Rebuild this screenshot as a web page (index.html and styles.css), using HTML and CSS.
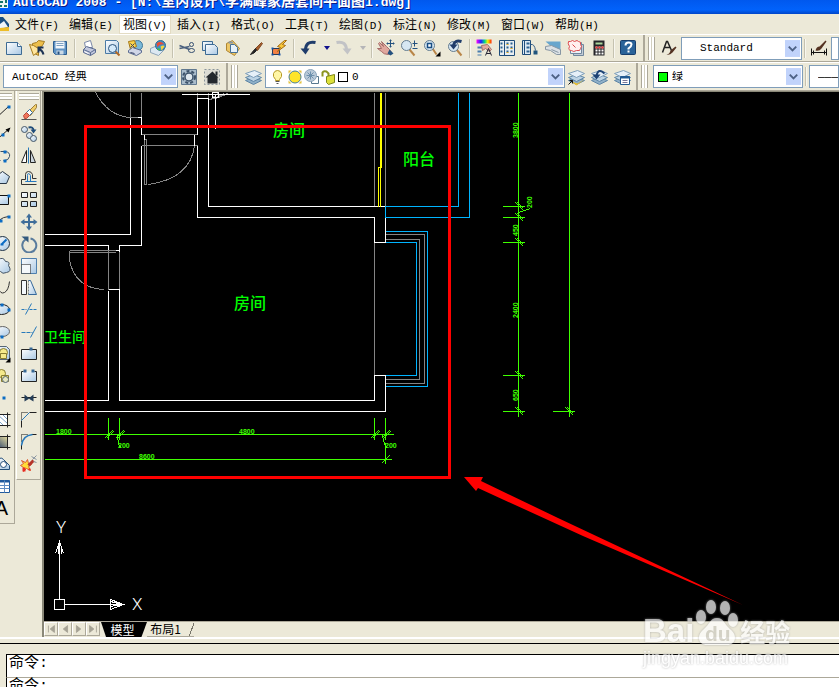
FILE: index.html
```
<!DOCTYPE html>
<html lang="zh-CN">
<head>
<meta charset="utf-8">
<title>AutoCAD 2008</title>
<link rel="stylesheet" href="styles.css">
</head>
<body>
<svg class="defs" aria-hidden="true">
  <defs>
    <linearGradient id="ice" x1="0" y1="0" x2="1" y2="1"><stop offset="0" stop-color="#fff"/><stop offset="1" stop-color="#a9c8e4"/></linearGradient>
    <linearGradient id="hue"><stop offset="0" stop-color="#f0f"/><stop offset=".3" stop-color="#22f"/><stop offset=".55" stop-color="#0d8"/><stop offset=".75" stop-color="#fe0"/><stop offset="1" stop-color="#f20"/></linearGradient>
    <linearGradient id="dark" x1="0" y1="1" x2="1" y2="0"><stop offset="0" stop-color="#223a66"/><stop offset="1" stop-color="#e6dca0"/></linearGradient>
  </defs>
  <symbol id="layers" viewBox="0 0 18 18"><path d="M1 12l8-3 8 3-8 4z" fill="#8fb0c8" stroke="#5f86a6"/><path d="M1 9l8-3 8 3-8 4z" fill="#bcd3e4" stroke="#5f86a6"/><path d="M1 5l9-3 7 3-8 4z" fill="#e6f0f8" stroke="#7f9fba"/></symbol>
  <symbol id="down" viewBox="0 0 16 18"><rect width="16" height="18" fill="#c1d3fb"/><path d="M4 7l4 4 4-4" fill="none" stroke="#4d6185" stroke-width="2"/></symbol>
</svg>

<header class="title">
  <svg width="9" height="9" viewBox="0 0 9 9" aria-hidden="true"><path d="M0 0h8v8H0z" fill="#eef4f4"/><path d="M0 1h3v2H0zM5 0h2v3H5zM0 5h2v2H0zM4 5h3v2H4z" fill="#15756d"/></svg>
  <h1>AutoCAD 2008 - [N:\<span>室内设计</span>\<span>李满峰家居套间平面图</span>1.dwg]</h1>
</header>

<nav class="menu" aria-label="菜单">
  <svg class="app" width="10" height="18" viewBox="0 0 10 18" aria-hidden="true"><path d="M0 2h3l6 7v7H0z" fill="#194e80"/><path d="M0 9l4-3 4 6-8 2z" fill="#eef5fa"/><path d="M0 13l9-1v4H0z" fill="#edbd28"/></svg>
  <button>文件<span>(F)</span></button><button>编辑<span>(E)</span></button><button class="on">视图<span>(V)</span></button><button>插入<span>(I)</span></button><button>格式<span>(O)</span></button><button>工具<span>(T)</span></button><button>绘图<span>(D)</span></button><button>标注<span>(N)</span></button><button>修改<span>(M)</span></button><button>窗口<span>(W)</span></button><button>帮助<span>(H)</span></button>
</nav>

<div class="bar">
  <div class="tools std" role="toolbar" aria-label="标准">
    <button aria-label="新建"><svg viewBox="-.5 -.5 18 18"><path d="M1 3h11l4 4v8H1z" fill="url(#ice)" stroke="#3d6b94"/><path d="M12 3v4h4" fill="#fff" stroke="#3d6b94"/></svg></button>
    <button aria-label="打开"><svg viewBox="-.5 -.5 18 18"><path d="M4 4l4-1 2-2 6 1-2 4-4 3v7l-6-3z" fill="#edbf4b" stroke="#a57c22"/><path d="M5 16L1 5l4 1 5 3v3z" fill="#ffe59b" stroke="#a57c22"/><path d="M15 15q-1-4-5-6m0 4V8h5" fill="none" stroke="#1d3354" stroke-width="2"/></svg></button>
    <button aria-label="保存"><svg viewBox="-.5 -.5 18 18"><path d="M2 2h13v13H4l-2-2z" fill="#5f93c4" stroke="#2c5d8f"/><path d="M4 2h9v7H4z" fill="#f2f7fb"/><path d="M5 4h7M5 6h7" stroke="#7da1c2"/><path d="M5 11h7v4H5z" fill="#cad9e6"/><path d="M6 12h2v3H6z" fill="#24507f"/></svg></button>
    <i class="sep"></i>
    <button aria-label="打印"><svg viewBox="-.5 -.5 18 18"><path d="M5 8L4 3l6-2 2 7z" fill="#fff" stroke="#7987a8"/><path d="M3 10l3-3 9 3v3l-5 3-7-3z" fill="#c3c9de" stroke="#596a90"/><path d="M3 10l7 3 5-3M10 13v3" fill="none" stroke="#596a90"/><path d="M4 12l4 2" stroke="#fff"/></svg></button>
    <button aria-label="打印预览"><svg viewBox="-.5 -.5 18 18"><path d="M2 1h11l2 2v11H2z" fill="url(#ice)" stroke="#4c7ba5"/><path d="M12 12l4 4" stroke="#b26924" stroke-width="2"/><circle cx="9" cy="9" r="4" fill="#d5eafa" stroke="#2a527a"/></svg></button>
    <button aria-label="发布"><svg viewBox="-.5 -.5 18 18"><circle cx="11" cy="6" r="5" fill="#7ab9d8" stroke="#3f7798"/><path d="M2 2l6-1 2 6-6 3z" fill="#fbd44b" stroke="#a47717"/><path d="M2 11l4-3 9 3v2l-5 3-8-3z" fill="#d0d6e7" stroke="#596a90"/><path d="M4 4l4 4M8 4L4 8M4 13l4 1" stroke="#3a4566"/></svg></button>
    <button aria-label="三维 DWF"><svg viewBox="-.5 -.5 18 18"><path d="M1 9l7-3 7 4-6 6-8-3z" fill="#dce8f2" stroke="#8fa5b9"/><circle cx="11" cy="6" r="5" fill="#3e8fca" stroke="#2f6d94"/><path d="M7 4q4-4 8 1-5-1-7 3z" fill="#e74c35"/><path d="M11 7q3-2 4 0l-3 4z" fill="#f8d537"/><path d="M8 8l3 2-1 1-2-1z" fill="#4fc03d"/></svg></button>
    <i class="sep"></i>
    <button aria-label="剪切"><svg viewBox="-.5 -.5 18 18"><path d="M1 6l10 4M1 9l10-2" stroke="#4a607e" stroke-width="1.5"/><ellipse cx="13" cy="5" rx="2" ry="2" fill="none" stroke="#334d70"/><ellipse cx="13" cy="11" rx="3" ry="2" fill="none" stroke="#334d70"/></svg></button>
    <button aria-label="复制"><svg viewBox="-.5 -.5 18 18"><path d="M1 2h10v9H1z" fill="url(#ice)" stroke="#3d6b94"/><path d="M4 5h9l3 3v7H4z" fill="url(#ice)" stroke="#3d6b94"/></svg></button>
    <button aria-label="粘贴"><svg viewBox="-.5 -.5 18 18"><path d="M2 4l6-3 7 8-5 7-8-5z" fill="#edc767" stroke="#ad8431"/><path d="M6 5h4l3 3v5H6z" fill="#e6f1f9" stroke="#456f96"/><path d="M4 2h4l1 2H4z" fill="#8a98a5"/></svg></button>
    <button aria-label="特性匹配"><svg viewBox="-.5 -.5 18 18"><path d="M8 9l6-6 1 1-5 7z" fill="#a95e2b" stroke="#7e4a25"/><path d="M3 15q4-1 6-4L8 9q-2 2-5 6z" fill="#222" stroke="#222"/></svg></button>
    <button aria-label="块编辑器"><svg viewBox="-.5 -.5 18 18"><path d="M2 9h7v6H2z" fill="#f28145" stroke="#273b57"/><path d="M14 1L7 7l3 1-3 4 8-6-3-1 4-4z" fill="#f8c839" stroke="#a46a11"/><path d="M1 8h2v2H1zM8 14h2v2H8zM1 14h2v2H1z" fill="#1855a5"/></svg></button>
    <i class="sep"></i>
    <button aria-label="放弃"><svg viewBox="-.5 -.5 18 18"><path d="M16 3Q6 1 6 11" fill="none" stroke="#1f3c6b" stroke-width="3"/><path d="M1 9h9l-4 6z" fill="#1f3c6b"/></svg></button>
    <button class="more" aria-label="放弃列表"><svg viewBox="0 0 6 4"><path d="M0 0h6L3 4z" fill="#11118c"/></svg></button>
    <button aria-label="重做"><svg viewBox="-.5 -.5 18 18"><path d="M1 3q10-2 10 8" fill="none" stroke="#c2c3c6" stroke-width="3"/><path d="M7 9h9l-4 6z" fill="#c2c3c6"/></svg></button>
    <button class="more" aria-label="重做列表"><svg viewBox="0 0 6 4"><path d="M0 0h6L3 4z" fill="#b5b5b8"/></svg></button>
    <i class="sep"></i>
    <button aria-label="平移"><svg viewBox="-.5 -.5 18 18"><path d="M2 3l4 4-2-5 5 5 3 3 2 3-3 2q-5 0-7-3L0 9l4 0-3-5z" fill="#e0a79e" stroke="#a56b68"/><path d="M12 10l4 4-3 2-3-2z" fill="#24517f"/><path d="M13 0v8M9 4h8M12 1h2M12 7h2M10 3v2M16 3v2" fill="none" stroke="#24517f"/></svg></button>
    <button aria-label="实时缩放"><svg viewBox="-.5 -.5 18 18"><path d="M9 10l5 6" stroke="#b98548" stroke-width="2"/><circle cx="6" cy="6" r="5" fill="#d7e7f2" stroke="#647c90"/><path d="M12 4h5M14 1v6M12 9h5" stroke="#24517f"/></svg></button>
    <button aria-label="窗口缩放"><svg viewBox="-.5 -.5 18 18"><path d="M9 9l4 6" stroke="#b98548" stroke-width="2"/><circle cx="6" cy="6" r="5" fill="#d7e7f2" stroke="#647c90"/><path d="M4 4h4v4H4z" fill="#fff" stroke="#174d83" stroke-width="1.5"/><path d="M17 12v5h-5z"/></svg></button>
    <button aria-label="缩放上一个"><svg viewBox="-.5 -.5 18 18"><path d="M10 10l5 6" stroke="#b98548" stroke-width="2"/><circle cx="7" cy="7" r="5" fill="#d7e7f2" stroke="#647c90"/><path d="M15 2Q8 0 7 6" fill="none" stroke="#1f3c6b" stroke-width="3"/><path d="M3 5h8l-4 5z" fill="#1f3c6b"/></svg></button>
    <i class="sep"></i>
    <button aria-label="特性"><svg viewBox="-.5 -.5 18 18"><path d="M1 0h15v4H1z" fill="url(#hue)"/><path d="M2 7h5v2H2zM2 11h4v2H2zM2 15h4v1H2z" fill="#477cae"/><path d="M6 6l6-1 4 5-2 2-4-3-3 2z" fill="#e5aaa0" stroke="#a5736c"/><path d="M10 16l3-7 3 7M11 14h4" fill="none" stroke="#223"/></svg></button>
    <button aria-label="设计中心"><svg viewBox="-.5 -.5 18 18"><path d="M1 1h15v15H1z" fill="#e9eef1" stroke="#1f4d7b"/><path d="M6 1v15" stroke="#1f4d7b"/><path d="M2 4h2M2 8h2M2 12h2M8 4h2M12 4h2M8 8h2M12 8h2M8 12h2M12 12h2" stroke="#2b6191" stroke-width="2"/><path d="M8 5h2M12 9h2M8 13h2" stroke="#e2ad25"/></svg></button>
    <button aria-label="工具选项板"><svg viewBox="-.5 -.5 18 18"><path d="M1 1h8v14H1z" fill="#dde9f2" stroke="#1f4d7b"/><path d="M3 1v14" stroke="#1f4d7b"/><path d="M5 4h3M5 8h3M5 12h3" stroke="#2b6191" stroke-width="2"/><path d="M9 5q4-1 5 6" fill="none" stroke="#345f88"/><path d="M12 11h4v4h-4z" fill="#20547d"/></svg></button>
    <button aria-label="图纸集"><svg viewBox="-.5 -.5 18 18"><path d="M1 2h15v13z" fill="#68a6cd"/><path d="M1 7l6-1 9 4v5h-4L6 11l-5-1z" fill="#dbe1e5" stroke="#8796a3"/><path d="M7 10l7 3" stroke="#8796a3"/></svg></button>
    <button aria-label="标记集"><svg viewBox="-.5 -.5 18 18"><path d="M6 5h10v11H6z" fill="#c3ccd6" stroke="#71879d"/><path d="M3 3h11v11H3z" fill="#eaf0f5" stroke="#71879d"/><path d="M3 2q2-2 4 0 3-2 4 0 3 0 2 3 2 2 0 4 0 3-4 2-3 2-5 0-4 0-2-4-2-3-1-5z" fill="#fff0ef" stroke="#dd4a4e"/><path d="M5 5l3 3" stroke="#dd4a4e"/></svg></button>
    <button aria-label="计算器"><svg viewBox="-.5 -.5 18 18"><path d="M3 1h11v15H3z" fill="#242428"/><path d="M5 3h7v2H5z" fill="#a9d49b"/><path d="M5 8h8M5 11h8M5 14h8" stroke="#fff" stroke-width="2" stroke-dasharray="2 1"/><path d="M5 8h8" stroke="#e33" stroke-width="2" stroke-dasharray="2 1"/></svg></button>
    <i class="sep"></i>
    <button aria-label="帮助"><svg viewBox="-.5 -.5 18 18"><rect x="1" y="1" width="15" height="14" rx="1" fill="#2a6399" stroke="#183e6c"/><path d="M6 6q0-3 3-3t3 2-3 4v1M9 11v2" fill="none" stroke="#fff" stroke-width="2"/></svg></button>
  </div>
  <div class="tools styles" role="toolbar" aria-label="样式">
    <i class="grip"></i>
    <button aria-label="文字样式"><svg viewBox="-.5 -.5 18 18"><path d="M2 13L6 2h1l4 9M4 8h6" fill="none" stroke="#222" stroke-width="1.5"/><path d="M6 15q3 0 4-4l5-4 1 1-4 5q-3 3-6 2z" fill="#553322"/></svg></button>
    <div class="combo w120 indent"><select aria-label="文字样式列表"><option>Standard</option></select><svg><use href="#down"/></svg></div>
    <i class="sep"></i>
    <button aria-label="标注样式"><svg viewBox="-.5 -.5 18 18"><path d="M1 9v7M16 9v7M1 13h15M3 11v4M14 11v4" stroke="#111"/><path d="M5 11q1-4 4-4l6-6 1 1-5 7q-2 3-6 2z" fill="#553322"/></svg></button>
    <div class="combo fill"><select aria-label="标注样式列表"><option>ISO-25</option></select></div>
  </div>
</div>

<div class="bar low">
  <div class="tools space" role="toolbar" aria-label="工作空间">
    <div class="combo w174"><select aria-label="工作空间列表"><option>AutoCAD 经典</option></select><svg><use href="#down"/></svg></div>
    <button aria-label="工作空间设置"><svg viewBox="-.5 -.5 18 18"><path d="M1 1h15v15H1z" fill="#a9bccb" stroke="#60788f"/><circle cx="8.500" cy="8.500" r="6" fill="none" stroke="#3b5168" stroke-width="2" stroke-dasharray="3 2"/><circle cx="8.500" cy="8.500" r="4" fill="#dfe8ee" stroke="#3b5168" stroke-width="1.5"/></svg></button>
    <button aria-label="我的工作空间"><svg viewBox="-.5 -.5 18 18"><path d="M1 1h15v15H1z" fill="#dcdcd4" stroke="#8b959b" stroke-dasharray="2 2"/><path d="M2 9l7-6 6 6h-1v6H4V9z" fill="#23282e"/><path d="M12 3h2v4h-2z" fill="#23282e"/></svg></button>
  </div>
  <div class="tools lay" role="toolbar" aria-label="图层">
    <i class="grip"></i>
    <button aria-label="图层特性"><svg viewBox="-.5 -.5 18 18"><use href="#layers" width="18" height="18"/></svg></button>
    <div class="combo fill layer">
      <svg viewBox="-.5 -.5 16 16" aria-hidden="true"><path d="M5 10Q2 7 3 4q1-3 4-3t4 3q1 3-2 6v1H5z" fill="#fff6a5" stroke="#b59a28"/><path d="M5 12h4M6 14h2" stroke="#555"/></svg><svg viewBox="-.5 -.5 16 16" aria-hidden="true"><path d="M1 1h3L1 4zM14 1v3l-3-3zM1 14v-3l3 3zM14 14h-3l3-3z" fill="#e4c13d"/><circle cx="7.500" cy="7.500" r="6" fill="#ffe52a" stroke="#4a8098"/></svg><svg viewBox="-.5 -.5 16 16" aria-hidden="true"><path d="M7 7h7v7H7z" fill="#fff" stroke="#58788f"/><circle cx="6" cy="6" r="6" fill="#b9c9d8" stroke="#8aa4bb"/><path d="M2 6h8M6 2v8M3 3l6 6M9 3L3 9" stroke="#6d90ad"/></svg><svg viewBox="-.5 -.5 16 16" aria-hidden="true"><path d="M1 7V3q1-2 4-1l2 2v4" fill="none" stroke="#8c9520" stroke-width="2"/><path d="M5 7l8-2v8l-6 2-2-2z" fill="#dde03a" stroke="#7d861a"/></svg><i class="swatch"></i>
      <select aria-label="图层列表"><option>0</option></select><svg class="arrow"><use href="#down"/></svg></div>
    <button aria-label="置为当前"><svg viewBox="-.5 -.5 18 18"><use href="#layers" width="18" height="18"/><path d="M4 13l6 2 7-4-8 6z" fill="#edc12d"/><path d="M1 16l4-4M5 15v-3H2" fill="none" stroke="#111"/></svg></button>
    <button aria-label="上一个图层"><svg viewBox="-.5 -.5 18 18"><use href="#layers" width="18" height="18"/><path d="M14 5Q8-1 6 7" fill="none" stroke="#1f4475" stroke-width="2"/><path d="M2 6h8l-4 5z" fill="#1f4475"/></svg></button>
    <button aria-label="图层状态"><svg viewBox="-.5 -.5 18 18"><use href="#layers" width="18" height="18"/><path d="M7 8h9v8H7z" fill="#fff" stroke="#225a91"/><path d="M7 9h9" stroke="#225a91" stroke-width="2"/><path d="M9 12h5M9 14h5" stroke="#779"/></svg></button>
  </div>
  <div class="tools props" role="toolbar" aria-label="对象特性">
    <i class="grip"></i>
    <div class="combo w150 layer"><i class="swatch green"></i><select aria-label="颜色"><option>绿</option></select><svg class="arrow"><use href="#down"/></svg></div>
    <i class="sep"></i>
    <div class="combo fill"><select aria-label="线型"><option>———— ByLayer</option></select></div>
  </div>
</div>

<main>
  <div class="col draw" role="toolbar" aria-label="绘图" aria-orientation="vertical">
    <i class="grip"></i>
    <button aria-label="直线"><svg viewBox="-.5 -.5 18 18"><path d="M1 16L15 3" stroke="#222"/><path d="M14 2h3v3h-3z" fill="#0b6cc4"/></svg></button>
    <button aria-label="构造线"><svg viewBox="-.5 -.5 18 18"><path d="M1 16L16 3" stroke="#222"/><path d="M17 2l-5 2 3 3z"/><path d="M8 8h3v3H8z" fill="#0b6cc4"/></svg></button>
    <button aria-label="多段线"><svg viewBox="-.5 -.5 18 18"><path d="M1 13h6M7 4h5q5 1 4 5-1 4-5 4h-1" fill="none" stroke="#344e68"/><path d="M10 3h3v3h-3zM10 12h3v3h-3z" fill="#0b6cc4"/></svg></button>
    <button aria-label="正多边形"><svg viewBox="-.5 -.5 18 18"><path d="M4 14L1 8l8-6 7 5-3 7z" fill="url(#ice)" stroke="#253445"/></svg></button>
    <button aria-label="矩形"><svg viewBox="-.5 -.5 18 18"><path d="M1 4h14v9H1z" fill="url(#ice)" stroke="#111"/><path d="M14 3h3v3h-3z" fill="#0b6cc4"/></svg></button>
    <button aria-label="圆弧"><svg viewBox="-.5 -.5 18 18"><path d="M1 15Q4 4 15 3" fill="none" stroke="#333"/><path d="M14 2h3v3h-3zM6 6h3v3H6z" fill="#0b6cc4"/></svg></button>
    <button aria-label="圆"><svg viewBox="-.5 -.5 18 18"><circle cx="9" cy="8" r="7" fill="url(#ice)" stroke="#1d3044"/><path d="M8 9l5-5M7 9h3" stroke="#0b6cc4" stroke-width="2"/></svg></button>
    <button aria-label="修订云线"><svg viewBox="-.5 -.5 18 18"><path d="M5 2q5-3 7 2 5 0 3 4 4 6-2 7-4 2-6-1-6 1-5-4-1-6 3-8z" fill="url(#ice)" stroke="#455566"/></svg></button>
    <button aria-label="样条曲线"><svg viewBox="-.5 -.5 18 18"><path d="M1 9q2-6 4 0t6 4 5-11" fill="none" stroke="#333"/></svg></button>
    <button aria-label="椭圆"><svg viewBox="-.5 -.5 18 18"><ellipse cx="8" cy="8" rx="8" ry="5" fill="url(#ice)" stroke="#222"/><path d="M14 7h3v3h-3zM7 2h3v3H7z" fill="#0b6cc4"/></svg></button>
    <button aria-label="椭圆弧"><svg viewBox="-.5 -.5 18 18"><ellipse cx="9" cy="8" rx="7" ry="5" fill="url(#ice)" stroke="#666"/><path d="M7 12h3v3H7z" fill="#0b6cc4"/></svg></button>
    <button aria-label="插入块"><svg viewBox="-.5 -.5 18 18"><path d="M1 1h12l3 3v10H1z" fill="url(#ice)" stroke="#567"/><circle cx="10" cy="7" r="4" fill="#f4e98b" stroke="#877c31"/><path d="M7 8h6v5H7z" fill="#f4e98b" stroke="#877c31"/><path d="M17 12v5h-5z"/></svg></button>
    <button aria-label="创建块"><svg viewBox="-.5 -.5 18 18"><circle cx="8" cy="6" r="4" fill="#f4e98b" stroke="#877c31"/><path d="M8 8h7v6H8z" fill="#f4e98b" stroke="#877c31"/><circle cx="12" cy="12" r="3" fill="#e7e8c0" stroke="#567"/></svg></button>
    <button aria-label="点"><svg viewBox="-.5 -.5 18 18"><path d="M9 7h3v3H9z" fill="#0b6cc4"/></svg></button>
    <button aria-label="图案填充"><svg viewBox="-.5 -.5 18 18"><path d="M1 3h13v11H1z" fill="#fff"/><path d="M1 5l9 9M1 9l5 5M4 3l10 9M9 3l5 5" stroke="#7fa5c8"/><path d="M0 3h17M0 14h17M14 1v15" stroke="#222"/></svg></button>
    <button aria-label="渐变色"><svg viewBox="-.5 -.5 18 18"><path d="M1 3h13v11H1z" fill="url(#dark)"/><path d="M0 3h17M0 14h17M14 1v15" stroke="#222"/></svg></button>
    <button aria-label="面域"><svg viewBox="-.5 -.5 18 18"><path d="M1 14V7q6-7 9-3l6 6v4z" fill="url(#ice)" stroke="#244e78"/><circle cx="10" cy="9" r="3" fill="#fff" stroke="#244e78"/></svg></button>
    <button aria-label="表格"><svg viewBox="-.5 -.5 18 18"><path d="M1 3h15v12H1z" fill="#fff" stroke="#205a9d"/><path d="M1 4h15" stroke="#205a9d" stroke-width="2"/><path d="M1 8h15M1 11h15M6 3v12M11 3v12" stroke="#5e8cc2"/></svg></button>
    <button class="letter" aria-label="多行文字">A</button>
  </div>
  <div class="col edit" role="toolbar" aria-label="修改" aria-orientation="vertical">
    <i class="grip"></i>
    <button aria-label="删除"><svg viewBox="-.5 -.5 18 18"><path d="M8 8l7-7h1v3l-6 8z" fill="#f2cf6a" stroke="#9a7c3b"/><path d="M6 9l3-3 3 3-3 3z" fill="#fff" stroke="#346b9d"/><path d="M3 12l3-3 3 3-3 3H4z" fill="#f0755c" stroke="#b54a3c"/><path d="M1 16h15" stroke="#555"/></svg></button>
    <button aria-label="复制对象"><svg viewBox="-.5 -.5 18 18"><circle cx="4" cy="4" r="3" fill="url(#ice)" stroke="#456"/><circle cx="9" cy="10" r="3" fill="url(#ice)" stroke="#456"/><circle cx="13" cy="13" r="3" fill="url(#ice)" stroke="#456"/><path d="M8 2q5-1 5 3" fill="none" stroke="#204d7a" stroke-width="2"/><path d="M10 4h6l-3 4z" fill="#204d7a"/></svg></button>
    <button aria-label="镜像"><svg viewBox="-.5 -.5 18 18"><path d="M6 3v12H1z" fill="#fff" stroke="#222"/><path d="M10 3v12h5z" fill="#ccd6de" stroke="#222"/><path d="M8 0v16" stroke="#2779bb"/></svg></button>
    <button aria-label="偏移"><svg viewBox="-.5 -.5 18 18"><path d="M16 15H1v-5h4V5q0-3 3-3t4 3v4h4" fill="none" stroke="#333"/><path d="M16 12H5h2V6q0-2 1-2t2 2v6" fill="none" stroke="#2577c0"/></svg></button>
    <button aria-label="阵列"><svg viewBox="-.5 -.5 18 18"><path d="M1 1h6v5H1zM10 1h6v5h-6zM1 10h6v5H1zM10 10h6v5h-6z" fill="url(#ice)" stroke="#222"/></svg></button>
    <button aria-label="移动"><svg viewBox="-.5 -.5 18 18"><path d="M8.500 2v13M2 8.500h13" stroke="#3f6d9a" stroke-width="2"/><path d="M8.500 0l3 4h-6zM8.500 17l3-4h-6zM0 8.500l4-3v6zM17 8.500l-4-3v6z" fill="#3f6d9a"/></svg></button>
    <button aria-label="旋转"><svg viewBox="-.5 -.5 18 18"><path d="M10 3a7 7 0 1 1-5 1" fill="none" stroke="#5a7c9d" stroke-width="2"/><path d="M1 1h7v6z" fill="#345a7e"/></svg></button>
    <button aria-label="缩放"><svg viewBox="-.5 -.5 18 18"><path d="M1 1h15v15H1z" fill="url(#ice)" stroke="#4f80ae"/><path d="M1 7h9v9H1z" fill="#f4f8fb" stroke="#111" stroke-dasharray="1 1"/></svg></button>
    <button aria-label="拉伸"><svg viewBox="-.5 -.5 18 18"><path d="M1 1h5v14H1z" fill="#f4f8fb" stroke="#333"/><path d="M8 1v14" stroke="#111" stroke-dasharray="2 1"/><path d="M8 1h2l6 14H8" fill="url(#ice)" stroke="#35689a"/></svg></button>
    <button aria-label="修剪"><svg viewBox="-.5 -.5 18 18"><path d="M1 8h5M9 8h8" stroke="#2779bb" stroke-dasharray="3 1"/><path d="M5 13l6-11" stroke="#2779bb"/></svg></button>
    <button aria-label="延伸"><svg viewBox="-.5 -.5 18 18"><path d="M1 9h11" stroke="#2779bb" stroke-dasharray="4 1"/><path d="M10 14l6-11" stroke="#2779bb"/></svg></button>
    <button aria-label="打断于点"><svg viewBox="-.5 -.5 18 18"><path d="M1 4h15v10H1z" fill="url(#ice)" stroke="#222"/><path d="M9 2h3v3H9z" fill="#376896"/></svg></button>
    <button aria-label="打断"><svg viewBox="-.5 -.5 18 18"><path d="M1 4h15v10H1z" fill="url(#ice)"/><path d="M3 4H1v10h15V4h-2" fill="none" stroke="#222"/><path d="M3 2h3v3H3zM11 2h3v3h-3z" fill="#376896"/></svg></button>
    <button aria-label="合并"><svg viewBox="-.5 -.5 18 18"><path d="M1 8h15" stroke="#222"/><path d="M4 5l5 4-5 3zM13 5L8 9l5 3z" fill="#243d57"/></svg></button>
    <button aria-label="倒角"><svg viewBox="-.5 -.5 18 18"><path d="M1 16V9M9 1h7" stroke="#222"/><path d="M1 8V1h7" fill="none" stroke="#111" stroke-dasharray="1 1"/><path d="M1 9l8-8" stroke="#2779bb"/></svg></button>
    <button aria-label="圆角"><svg viewBox="-.5 -.5 18 18"><path d="M1 16v-5M11 1h5" stroke="#222"/><path d="M1 8V1h7" fill="none" stroke="#111" stroke-dasharray="1 1"/><path d="M1 12Q2 2 12 1" fill="none" stroke="#2779bb" stroke-width="1.5"/></svg></button>
    <button aria-label="分解"><svg viewBox="-.5 -.5 18 18"><path d="M1 5l4 2 2-3 1 4 3 1-3 2 2 4-4-2-3 3v-4l-3-2 3-2z" fill="#ffdc36" stroke="#dc5a37"/><path d="M8 10l5-5" stroke="#b5342a" stroke-width="3"/><path d="M12 4l4-4M11 1l5 3M13 6l3 1" stroke="#8793a0"/><path d="M2 12h3v4H2zM8 13h2v2H8z" fill="#e82b22"/></svg></button>
  </div>

  <section class="view">
    <svg class="paper" role="img" aria-label="平面图">
      <g transform="translate(-44 -92)">
        <g class="lines" transform="translate(.5 .5)">
          <path class="gray" d="M130 92v25M141 92v25M197 92v6M208 92v6M141 134h56M141 145h56M144 139h2v45h-2zM194 145Q190 178 148 184M95 92Q108 116 130 117h7M374 92v114M385 92v114M374 242v133M108 249v40M119 251v38M69 250h46M69 252h46M69 250v9Q74 288 104 289M385 234h39v149h-39M385 239h34v140h-34M208 99q12-1 20-7M211 98l8-6M216 97l8-4"/>
          <path class="white" d="M44 234h86V117M137 117h4v17M144 134v5M194 134v11M141 145v100h-22V251M115 250h4M44 245h64v4M108 289h11V400H374v-25h11v36H44M44 400h64V290M197 145v72h177v25h11v-25M197 134V98h11v108h177M181 94h68M215 94v34M212 92h6v5h-6z"/>
          <path class="blue" d="M458 92v114h-73v11h84V92M385 231h42v155h-42M385 242h31v133h-31"/>
          <path class="yellow" d="M380 92v75M381 92v75M378 206v-39h2v39"/>
          <path class="lime" d="M518 92v324M569 92v324M502 206h22M502 217h22M502 242h22M502 375h22M502 411h22M552 411h22M44 434h349M44 459h347M108 417v22M119 417v22M374 417v22M385 417v22M385 442v21M518 212l12-4M117 435l1 9 3 4M382 435l2 9 3 4M104 438l8-8M106 438l7-7M115 438l8-8M117 438l7-7M370 438l8-8M372 438l7-7M381 438l8-8M383 438l7-7M381 463l8-8M515 202l8 8M517 202l6 6M515 213l8 8M517 213l6 6M515 238l8 8M517 238l6 6M515 371l8 8M517 371l6 6M515 407l8 8M517 407l6 6M565 407l8 8M567 407l6 6"/>
          <path class="white" d="M54 599h10v10H54zM59 598v-57M64 604h59M55 553l4-12 4 12M110 599v10l13-5zM110 601l12 3-12 2M58 553v-8M61 553v-8"/>
        </g>
        <g class="room"><text x="273" y="136">房间</text><text x="234" y="309">房间</text><text x="403" y="165">阳台</text><text class="bath" x="44" y="342">卫生间</text></g>
        <g class="dim"><text x="56" y="434">1800</text><text x="239" y="434">4800</text><text x="139" y="459">8600</text><text x="118" y="448">200</text><text x="385" y="448">200</text>
          <text transform="translate(518 138) rotate(-90)">3800</text><text transform="translate(532 208) rotate(-90)">200</text><text transform="translate(518 236) rotate(-90)">450</text><text transform="translate(518 318) rotate(-90)">2400</text><text transform="translate(518 401) rotate(-90)">650</text></g>
        <g class="axis"><text x="56" y="533">Y</text><text x="132" y="610">X</text></g>
        <rect class="mark" x="85.5" y="126.5" width="364" height="351"/>
        <path fill="red" d="M464 477h19l-2 4 77 37 185 87-160-69-105-48-2 3z"/>
      </g>
    </svg>
    <div class="tabs">
      <button class="step" aria-label="第一个"><svg viewBox="0 0 14 14"><path d="M4 3v8M11 3v8L6 7z"/></svg></button><button class="step" aria-label="上一个"><svg viewBox="0 0 14 14"><path d="M10 3v8L5 7z"/></svg></button><button class="step" aria-label="下一个"><svg viewBox="0 0 14 14"><path d="M4 3v8l5-4z"/></svg></button><button class="step" aria-label="最后一个"><svg viewBox="0 0 14 14"><path d="M3 3v8l5-4zM11 3v8"/></svg></button>
      <button class="tab model">模型</button><button class="tab layout">布局1</button>
    </div>
  </section>
</main>

<section class="command" aria-label="命令行">
  <div class="log">命令:</div>
  <div class="log"><label for="cmd">命令:</label><input id="cmd"></div>
</section>

<aside class="stamp">
  <div class="brand"><span>Bai</span><svg width="46" height="48" viewBox="0 0 46 48" aria-hidden="true"><g fill="#fff"><ellipse cx="7" cy="18" rx="5" ry="7"/><ellipse cx="17" cy="8" rx="5" ry="7"/><ellipse cx="31" cy="9" rx="5" ry="7"/><ellipse cx="39" cy="21" rx="5" ry="7"/><path d="M23 19c7 0 7 6 13 11 8 6 6 16-3 16H13c-9 0-11-10-3-16 6-5 6-11 13-11z"/></g><text x="11" y="42">du</text></svg><b>经验</b></div>
  <div class="site">jingyan.baidu.com</div>
</aside>
</body>
</html>
```

FILE: styles.css
```
* { box-sizing: border-box; }
html, body { height: 100%; }
body {
  margin: 0;
  display: flex;
  flex-direction: column;
  overflow: hidden;
  background: #ece9d8;
  color: #000;
  font: 12px/16px "Liberation Mono", "Noto Sans CJK SC", monospace;
}
button, select, input { font: inherit; color: inherit; padding: 0; margin: 0; border: 0; background: none; border-radius: 0; }
svg { display: block; flex: none; }
.defs { position: absolute; width: 0; height: 0; }

.title {
  flex: none;
  display: flex;
  align-items: flex-start;
  gap: 4px;
  height: 14px;
  overflow: hidden;
  background: linear-gradient(#0058ee, #0162fb 70%, #0046c8);
  color: #fff;
}
.title h1 {
  margin: -8px 0 0;
  font: bold 13px/20px "Liberation Mono", "Noto Sans CJK SC", monospace;
  text-shadow: 1px 1px #0a1883;
  white-space: nowrap;
}
.title span { font-size: 14px; }

.menu { flex: none; display: flex; align-items: center; height: 20px; font-family: "Noto Sans CJK SC", sans-serif; }
.menu .app { margin-right: 1px; }
.menu button { width: 52px; height: 19px; margin-right: 2px; white-space: nowrap; }
.menu span { font: 11px "Liberation Mono", monospace; }
.menu .on { background: #fff; border: 1px solid #e3dcc4; }

.bar { flex: none; display: flex; height: 28px; border-top: 1px solid #fff; }
.tools { display: flex; align-items: center; border-bottom: 1px solid #aca899; flex: none; padding-left: 3px; border-right: 2px solid #aca899; }
.tools button { width: 23px; height: 24px; flex: none; display: flex; align-items: center; padding-left: 2px; }
.tools button svg { width: 18px; height: 18px; }
.tools .more { width: 13px; padding-left: 4px; }
.tools .more svg { width: 6px; height: 4px; }
.sep { width: 2px; height: 19px; margin: 0 2px; flex: none; border-left: 1px solid #c5c2b0; border-right: 1px solid #f8f7f0; }
.grip { flex: none; width: 7px; height: 23px; border: 1px solid #aca899; border-width: 0 1px; background: linear-gradient(90deg, #fff 2px, #d2cfbf 2px, #d2cfbf 3px, #fff 3px); }
.std { padding-right: 3px; }
.styles, .props { flex: 1; min-width: 0; border-right: 0; }
.styles .grip { margin-right: 3px; }
.low { height: 29px; }
.space { padding-right: 2px; }
.lay { flex: 0 1 410px; padding-right: 2px; }
.lay .grip { margin-right: 4px; }
.props .grip { margin-right: 5px; }
.combo {
  position: relative;
  display: flex;
  align-items: center;
  height: 23px;
  flex: none;
  background: #fff;
  border: 1px solid #7f9db9;
}
.combo select { appearance: none; flex: 1; min-width: 0; height: 21px; padding-left: 8px; font: 11px "Liberation Mono", "Noto Sans CJK SC", monospace; }
.indent select { padding-left: 18px; }
.combo > svg { width: 16px; height: 16px; }
.combo > svg:last-child { position: absolute; right: 1px; top: 1px; width: 15px; height: 19px; pointer-events: none; }
.w120 { width: 121px; }
.w150 { width: 150px; }
.w174 { width: 175px; }
.fill { flex: 1 1 0; min-width: 0; overflow: hidden; }
.layer { padding-left: 4px; gap: 1px; }
.layer select { padding-left: 3px; }
.swatch { width: 10px; height: 10px; border: 1px solid #000; flex: none; }
.green { background: #0f0; }

main { flex: 1; min-height: 0; display: flex; overflow: hidden; }
.col { flex: none; align-self: flex-start; display: flex; flex-direction: column; align-items: center; border: solid #aca899; border-width: 0 1px 1px 0; padding-bottom: 4px; }
.col .grip { width: 20px; height: 7px; margin: 2px 0 1px; border-width: 1px 0; background: linear-gradient(#fff 2px, #d2cfbf 2px, #d2cfbf 3px, #fff 3px); }
.col button { width: 24px; height: 22px; display: grid; place-items: center; }
.col button svg { width: 18px; height: 18px; }
.draw { width: 26px; margin-left: -11px; }
.draw .letter { font: 20px/22px "Liberation Sans", sans-serif; }
.edit { width: 25px; margin-left: 1px; border-left: 1px solid #fff; }
.view { flex: 1; min-width: 0; margin-left: 1px; display: flex; flex-direction: column; border: solid #8a8878; border-width: 1px 0 0 2px; }
.paper { flex: 1; min-height: 0; width: 100%; background: #000; }
.lines path { fill: none; stroke-width: 1px; shape-rendering: crispEdges; }
.gray { stroke: #848484; }
.white { stroke: #fff; }
.blue { stroke: #00b4ff; }
.yellow { stroke: #ff0; }
.lime { stroke: #3fff00; }
.room { fill: #0f0; font: 500 16px "Noto Sans CJK SC", sans-serif; }
.room .bath { font-size: 14px; }
.dim { fill: #3fff00; font: bold 7px "Liberation Sans", sans-serif; }
.axis { fill: #fff; font: 300 17px Roboto, sans-serif; }
.mark { fill: none; stroke: red; stroke-width: 3px; }

.tabs { flex: none; height: 16px; display: flex; border-top: 1px solid #aca899; }
.step { width: 14px; height: 14px; border: 1px solid #c9c6b5; border-color: #fff #aca899 #aca899 #fff; }
.step svg { width: 12px; height: 12px; fill: #a5a294; stroke: #a5a294; }
.tab { height: 15px; font: 12px/14px "Noto Sans CJK SC", sans-serif; }
.model { width: 46px; margin-left: 1px; padding-right: 3px; background: #000; color: #fff; clip-path: polygon(0 0, 100% 0, 88% 100%, 11% 100%); }
.layout { width: 47px; border-bottom: 1px solid #aca899; background: linear-gradient(110deg, transparent 44px, #77756a 44px, #77756a 45px, transparent 45px); padding-right: 10px; }

.command {
  flex: none;
  height: 50px;
  border-top: 2px solid #fff;
  padding: 15px 0 0 6px;
  overflow: hidden;
  background: linear-gradient(#ece9d8 4px, #000 4px, #000 5px, #ece9d8 5px);
}
.log { display: flex; height: 24px; padding-left: 2px; background: #fff; border-left: 1px solid #000; border-bottom: 1px solid #aca899; font: 15px/18px "Liberation Mono", "Noto Sans CJK SC", monospace; }
.log:first-child { border-top: 1px solid #000; }
.log input { flex: 1; min-width: 0; outline: 0; }

.stamp { position: absolute; left: 643px; top: 597px; opacity: .7; color: #fff; pointer-events: none; filter: drop-shadow(0 0 1px #999); }
.brand { display: flex; align-items: flex-end; height: 50px; font: bold 33px/32px "Liberation Sans", sans-serif; }
.brand b { font: bold 25px/32px "Noto Sans CJK SC", sans-serif; }
.brand text { font: bold 21px "Liberation Sans", sans-serif; fill: #c9c7bd; }
.site { font: 18px/22px "Liberation Sans", sans-serif; }
```
